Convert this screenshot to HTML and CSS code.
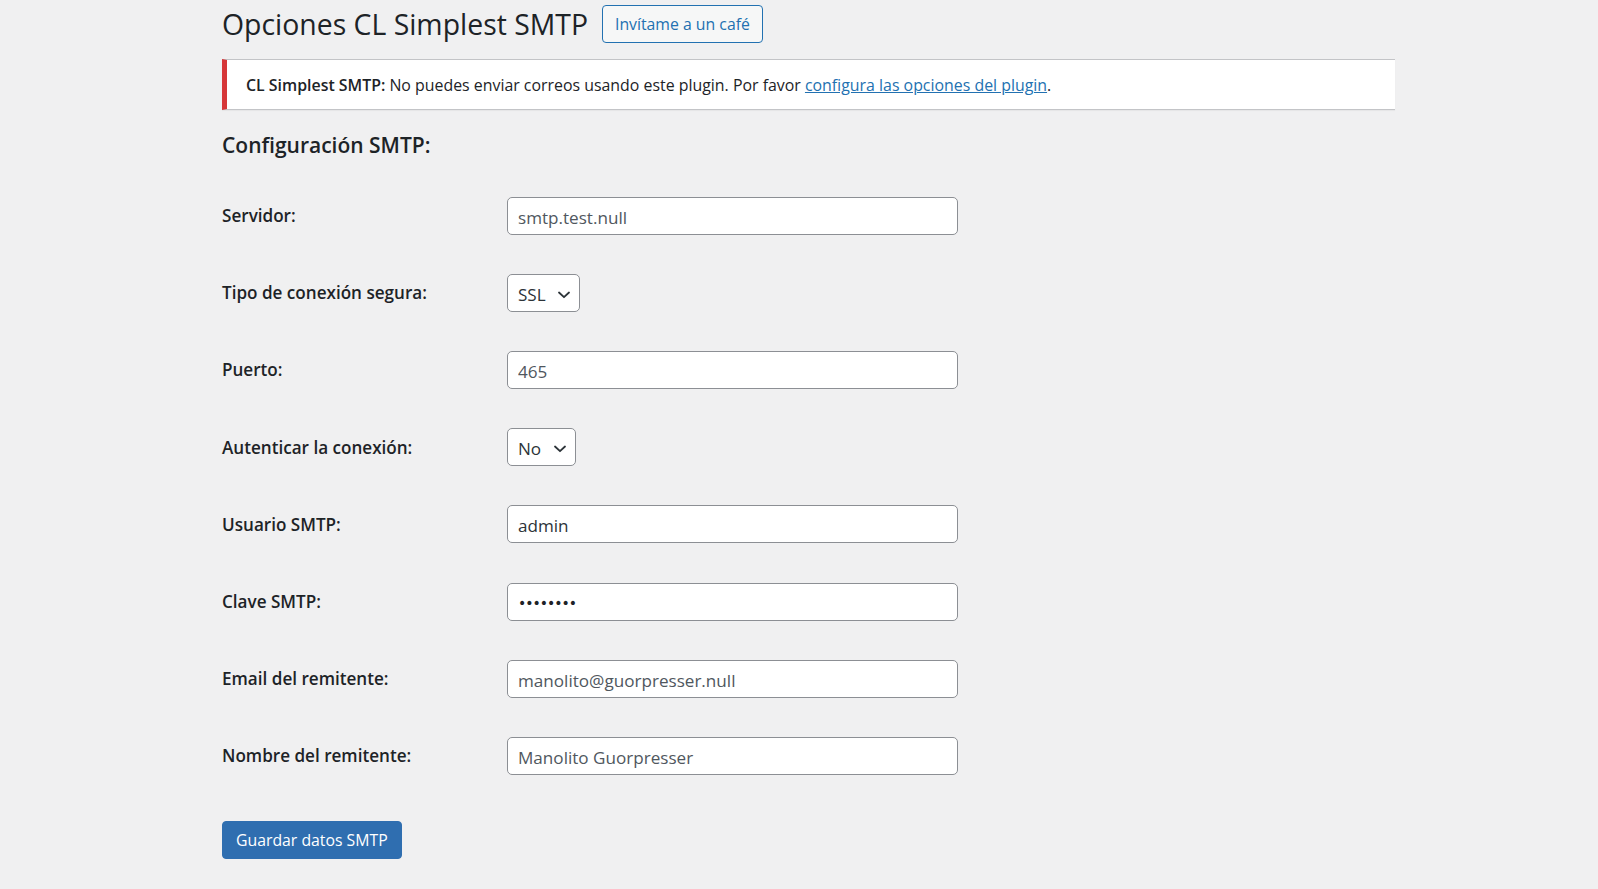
FILE: index.html
```html
<!DOCTYPE html>
<html lang="es">
<head>
<meta charset="utf-8">
<title>Opciones CL Simplest SMTP</title>
<link rel="stylesheet" href="styles.css">
</head>
<body>
<div class="wrap">
  <div class="page-head">
    <h1 class="page-title">Opciones CL Simplest SMTP</h1>
    <a class="btn-secondary" href="#">Invítame a un café</a>
  </div>

  <div class="notice">
    <p><strong>CL Simplest SMTP:</strong> No puedes enviar correos usando este plugin. Por favor <a href="#">configura las opciones del plugin</a>.</p>
  </div>

  <h2 class="section-title">Configuración SMTP:</h2>

  <form class="form-table">
    <div class="row">
      <label class="row-label" for="srv">Servidor:</label>
      <input id="srv" class="text-input muted" type="text" value="smtp.test.null">
    </div>
    <div class="row">
      <label class="row-label" for="sec">Tipo de conexión segura:</label>
      <div class="select-wrap">
        <select id="sec" class="select"><option>SSL</option></select>
        <svg class="chev" width="12" height="8" viewBox="0 0 12 8"><path d="M1 1.5 L6 6.2 L11 1.5" fill="none" stroke="#2c3338" stroke-width="1.8" stroke-linecap="round" stroke-linejoin="round"/></svg>
      </div>
    </div>
    <div class="row">
      <label class="row-label" for="port">Puerto:</label>
      <input id="port" class="text-input muted" type="text" value="465">
    </div>
    <div class="row">
      <label class="row-label" for="auth">Autenticar la conexión:</label>
      <div class="select-wrap">
        <select id="auth" class="select"><option>No</option></select>
        <svg class="chev" width="12" height="8" viewBox="0 0 12 8"><path d="M1 1.5 L6 6.2 L11 1.5" fill="none" stroke="#2c3338" stroke-width="1.8" stroke-linecap="round" stroke-linejoin="round"/></svg>
      </div>
    </div>
    <div class="row">
      <label class="row-label" for="user">Usuario SMTP:</label>
      <input id="user" class="text-input" type="text" value="admin">
    </div>
    <div class="row">
      <label class="row-label" for="pass">Clave SMTP:</label>
      <input id="pass" class="text-input" type="password" value="12345678">
    </div>
    <div class="row">
      <label class="row-label" for="mail">Email del remitente:</label>
      <input id="mail" class="text-input muted" type="text" value="manolito@guorpresser.null">
    </div>
    <div class="row">
      <label class="row-label" for="name">Nombre del remitente:</label>
      <input id="name" class="text-input muted" type="text" value="Manolito Guorpresser">
    </div>
    <div class="submit-row">
      <button class="btn-primary" type="button">Guardar datos SMTP</button>
    </div>
  </form>
</div>
</body>
</html>
```

FILE: styles.css
```css
* { box-sizing: border-box; }

html, body {
  margin: 0;
  padding: 0;
  background: #f0f0f1;
}

body {
  font-family: "Open Sans", "Noto Sans", sans-serif;
  color: #1d2327;
}

.wrap {
  margin-left: 222px;
  width: 1173px;
  padding-top: 5px;
}

.page-head {
  display: flex;
  align-items: center;
  height: 38px;
}

.page-title {
  margin: 0;
  font-size: 28.4px;
  font-weight: 400;
  line-height: 38px;
  color: #1d2327;
}

.btn-secondary {
  margin-left: 14px;
  display: inline-flex;
  align-items: center;
  height: 38px;
  padding: 0 12px;
  border: 1px solid #2271b1;
  border-radius: 4px;
  background: #f6f7f7;
  color: #2271b1;
  font-size: 15.8px;
  text-decoration: none;
}

.notice {
  margin-top: 16px;
  height: 51px;
  display: flex;
  align-items: center;
  background: #fff;
  border: 1px solid #c3c4c7;
  border-left: 5px solid #d63638;
  border-right: 0;
  box-shadow: 0 1px 1px rgba(0,0,0,.04);
  padding: 0 19px;
}

.notice p {
  margin: 0;
  font-size: 15.9px;
  color: #1d2327;
}

.notice strong { font-weight: 600; }

.notice a {
  color: #2271b1;
  text-decoration: underline;
}

.section-title {
  margin: 21px 0 0;
  font-size: 21px;
  font-weight: 600;
  line-height: 28px;
  color: #1d2327;
}

.form-table {
  margin-top: 18px;
}

.row {
  display: grid;
  grid-template-columns: 285px 451px;
  align-items: center;
  padding: 19.6px 0;
}

.row-label {
  font-size: 17.1px;
  font-weight: 600;
  color: #1d2327;
}

.text-input {
  width: 451px;
  height: 38px;
  border: 1px solid #8c8f94;
  border-radius: 5px;
  background: #fff;
  padding: 3px 10px 0;
  font-family: "Open Sans", "Noto Sans", sans-serif;
  font-size: 17.1px;
  color: #2c3338;
  outline: none;
}

.text-input.muted { color: #50575e; }

.text-input[type="password"] {
  font-family: "DejaVu Sans", sans-serif;
  font-size: 14px;
  letter-spacing: -1px;
  color: #1d2327;
}

.select-wrap {
  position: relative;
  justify-self: start;
  display: inline-flex;
}

.select {
  -webkit-appearance: none;
  appearance: none;
  height: 38px;
  border: 1px solid #8c8f94;
  border-radius: 5px;
  background: #fff;
  padding: 3px 33px 0 10px;
  font-family: "Open Sans", "Noto Sans", sans-serif;
  font-size: 17.1px;
  color: #2c3338;
  outline: none;
}

.chev {
  position: absolute;
  right: 10px;
  top: 17px;
  pointer-events: none;
}

.submit-row {
  margin-top: 26px;
}

.btn-primary {
  height: 38px;
  padding: 0 13px;
  border: 1px solid #2f6eb0;
  border-radius: 4px;
  background: #2f6eb0;
  color: #fff;
  font-family: "Open Sans", "Noto Sans", sans-serif;
  font-size: 15.8px;
  cursor: pointer;
}
```
